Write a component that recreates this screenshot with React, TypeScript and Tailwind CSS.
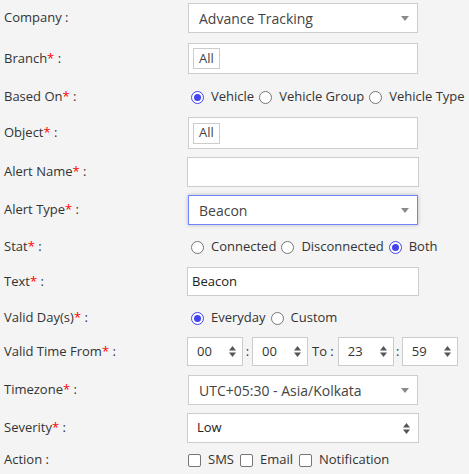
import React from "react";

const font = { fontFamily: '"Open Sans", "Liberation Sans", sans-serif' };

function Label({ text, req }: { text: string; req?: boolean }) {
  return (
    <div className="w-[187px] shrink-0 pl-1 text-[13px] text-[#333]">
      {text}
      {req && <span className="text-[#ff0000]">*</span>} :
    </div>
  );
}

function Radio({ checked, label }: { checked?: boolean; label: string }) {
  return (
    <span className="flex items-center shrink-0">
      <span
        className={
          checked
            ? "w-[13px] h-[13px] rounded-full border border-[#4343f0] bg-white flex items-center justify-center"
            : "w-[13px] h-[13px] rounded-full border border-[#767676] bg-white"
        }
      >
        {checked && <span className="w-[7px] h-[7px] rounded-full bg-[#4343f0]" />}
      </span>
      <span className="ml-[7px] mr-[5px] whitespace-nowrap text-[13px] text-[#333]">{label}</span>
    </span>
  );
}

function Check({ label }: { label: string }) {
  return (
    <span className="flex items-center shrink-0">
      <span className="w-[13px] h-[13px] rounded-[2px] border border-[#767676] bg-white" />
      <span className="ml-[7px] mr-[6px] whitespace-nowrap text-[13px] text-[#333]">{label}</span>
    </span>
  );
}

function Caret() {
  return (
    <svg width="8" height="5" viewBox="0 0 8 5" className="shrink-0">
      <path d="M0 0h8L4 5z" fill="#8a8a8a" />
    </svg>
  );
}

function Spin() {
  return (
    <svg width="7" height="11" viewBox="0 0 7 11" className="shrink-0">
      <path d="M0 4.5L3.5 0 7 4.5z" fill="#555" />
      <path d="M0 6.5h7L3.5 11z" fill="#555" />
    </svg>
  );
}

function ChosenSelect({ value, focus }: { value: string; focus?: boolean }) {
  return (
    <div
      className={
        focus
          ? "ml-px w-[230px] h-[30px] bg-white border border-[#6f82ff] shadow-[0_0_4px_rgba(0,0,0,0.25)] flex items-center justify-between pl-[10px] pr-[8px]"
          : "ml-px w-[230px] h-[30px] bg-white border border-[#cccccc] flex items-center justify-between pl-[10px] pr-[8px]"
      }
    >
      <span className="text-[14px] text-[#444]">{value}</span>
      <Caret />
    </div>
  );
}

function TagBox({ h }: { h: number }) {
  return (
    <div
      className="ml-px w-[230px] bg-white border border-[#cccccc] flex items-center pl-[4px]"
      style={{ height: h }}
    >
      <span className="h-[21px] px-[5px] border border-[#cccccc] flex items-center text-[13px] text-[#444]">
        All
      </span>
    </div>
  );
}

function TimeBox({ v }: { v: string }) {
  return (
    <div className="w-[56px] h-[29px] bg-white border border-[#cccccc] flex items-center justify-between pl-[9px] pr-[6px]">
      <span className="text-[13px] text-[#333]">{v}</span>
      <Spin />
    </div>
  );
}

export default function App() {
  return (
    <div className="w-[469px] h-[474px] bg-[#f4f4f4] overflow-hidden" style={font}>
      <div className="flex items-center mt-[3px] h-[30px]">
        <Label text="Company" />
        <ChosenSelect value="Advance Tracking" />
      </div>

      <div className="flex items-center mt-[10px] h-[31px]">
        <Label text="Branch" req />
        <TagBox h={31} />
      </div>

      <div className="flex items-center mt-[13px] h-[20px]">
        <Label text="Based On" req />
        <div className="flex items-center pl-[4px] shrink-0">
          <Radio checked label="Vehicle" />
          <Radio label="Vehicle Group" />
          <Radio label="Vehicle Type" />
        </div>
      </div>

      <div className="flex items-center mt-[10px] h-[32px]">
        <Label text="Object" req />
        <TagBox h={32} />
      </div>

      <div className="flex items-center mt-[8px] h-[30px]">
        <Label text="Alert Name" req />
        <div className="w-[232px] h-[30px] bg-white border border-[#cccccc]" />
      </div>

      <div className="flex items-center mt-[8px] h-[30px]">
        <Label text="Alert Type" req />
        <ChosenSelect value="Beacon" focus />
      </div>

      <div className="flex items-center mt-[12px] h-[20px]">
        <Label text="Stat" req />
        <div className="flex items-center pl-[4px] shrink-0">
          <Radio label="Connected" />
          <Radio label="Disconnected" />
          <Radio checked label="Both" />
        </div>
      </div>

      <div className="flex items-center mt-[10px] h-[29px]">
        <Label text="Text" req />
        <div className="w-[232px] h-[29px] bg-white border border-[#cccccc] flex items-center pl-[4px] text-[13px] text-[#222]">
          Beacon
        </div>
      </div>

      <div className="flex items-center mt-[12px] h-[20px]">
        <Label text="Valid Day(s)" req />
        <div className="flex items-center pl-[4px] shrink-0">
          <Radio checked label="Everyday" />
          <Radio label="Custom" />
        </div>
      </div>

      <div className="flex items-center mt-[9px] h-[29px]">
        <Label text="Valid Time From" req />
        <div className="flex items-center text-[13px] text-[#333]">
          <TimeBox v="00" />
          <span className="w-[9px] text-center">:</span>
          <TimeBox v="00" />
          <span className="px-[4px]">To :</span>
          <TimeBox v="23" />
          <span className="w-[8px] text-center">:</span>
          <TimeBox v="59" />
        </div>
      </div>

      <div className="flex items-center mt-[9px] h-[30px]">
        <Label text="Timezone" req />
        <ChosenSelect value="UTC+05:30 - Asia/Kolkata" />
      </div>

      <div className="flex items-center mt-[8px] h-[30px]">
        <Label text="Severity" req />
        <div className="w-[232px] h-[30px] bg-white border border-[#cccccc] flex items-center justify-between pl-[9px] pr-[8px]">
          <span className="text-[13px] text-[#222]">Low</span>
          <Spin />
        </div>
      </div>

      <div className="flex items-center mt-[7px] h-[20px]">
        <Label text="Action" />
        <div className="flex items-center pl-px shrink-0">
          <Check label="SMS" />
          <Check label="Email" />
          <Check label="Notification" />
        </div>
      </div>
    </div>
  );
}
